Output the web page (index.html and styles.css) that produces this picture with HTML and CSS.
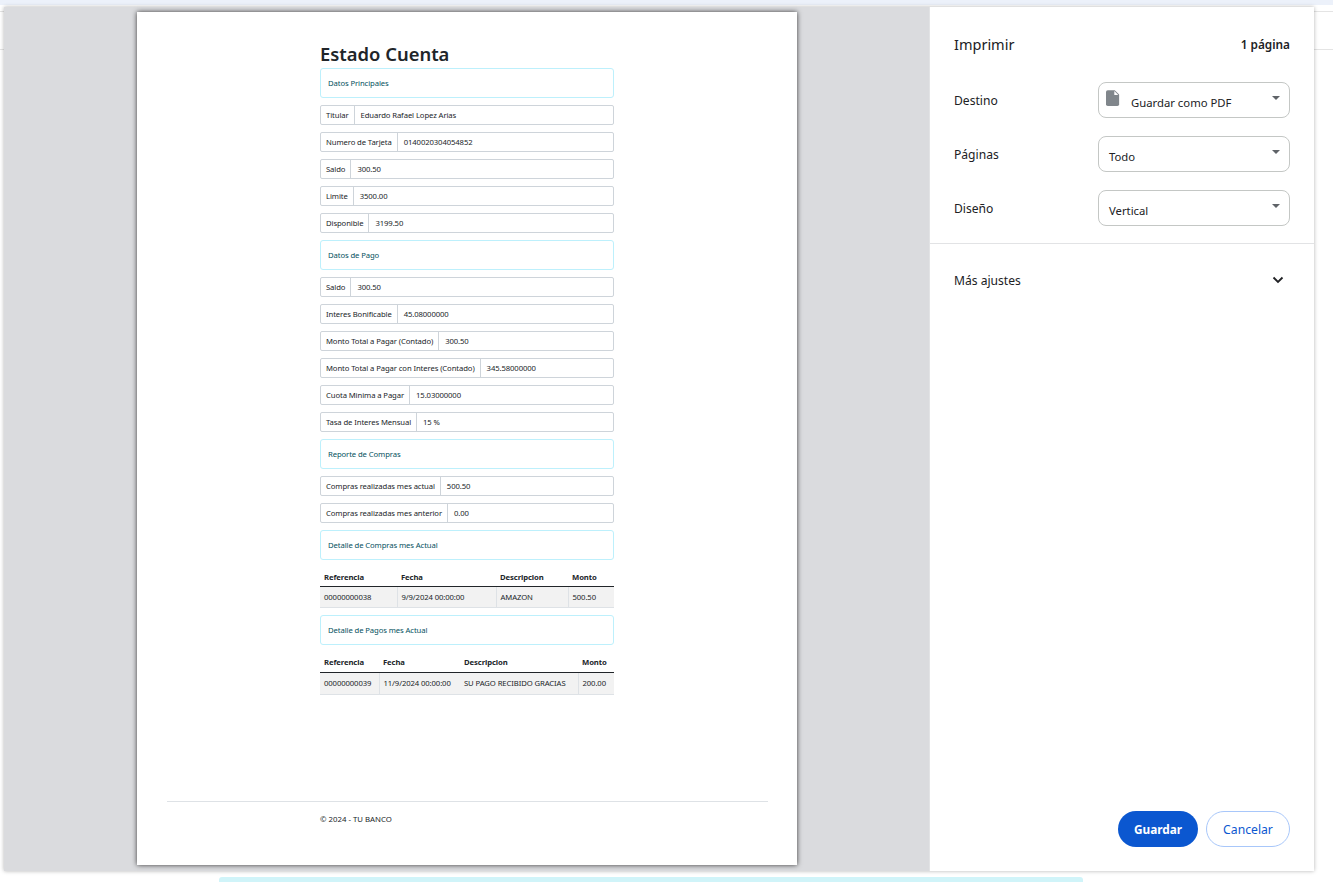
FILE: index.html
```html
<!DOCTYPE html>
<html lang="en">
<head>
    <meta charset="UTF-8">
    <meta name="viewport" content="width=device-width, initial-scale=1.0">
    <title>Imprimir - Estado Cuenta</title>
    <link rel="stylesheet" href="styles.css">
</head>

<body>

    <!-- page behind the print dialog -->
    <div class="top-strip"></div>
    <div class="back-line back-line-1"></div>
    <div class="back-line back-line-2"></div>

    <div class="dialog">

        <div class="preview">
            <div class="sheet">
                <div class="sheet-body">
                    <h2>Estado Cuenta</h2>

                    <div class="alert">Datos Principales</div>
                    <div class="group"><span class="group-label">Titular</span><span class="group-value">Eduardo Rafael Lopez Arias</span></div>
                    <div class="group"><span class="group-label">Numero de Tarjeta</span><span class="group-value">0140020304054852</span></div>
                    <div class="group"><span class="group-label">Saldo</span><span class="group-value">300.50</span></div>
                    <div class="group"><span class="group-label">Limite</span><span class="group-value">3500.00</span></div>
                    <div class="group"><span class="group-label">Disponible</span><span class="group-value">3199.50</span></div>

                    <div class="alert">Datos de Pago</div>
                    <div class="group"><span class="group-label">Saldo</span><span class="group-value">300.50</span></div>
                    <div class="group"><span class="group-label">Interes Bonificable</span><span class="group-value">45.08000000</span></div>
                    <div class="group"><span class="group-label">Monto Total a Pagar (Contado)</span><span class="group-value">300.50</span></div>
                    <div class="group"><span class="group-label">Monto Total a Pagar con Interes (Contado)</span><span class="group-value">345.58000000</span></div>
                    <div class="group"><span class="group-label">Cuota Minima a Pagar</span><span class="group-value">15.03000000</span></div>
                    <div class="group"><span class="group-label">Tasa de Interes Mensual</span><span class="group-value">15 %</span></div>

                    <div class="alert">Reporte de Compras</div>
                    <div class="group"><span class="group-label">Compras realizadas mes actual</span><span class="group-value">500.50</span></div>
                    <div class="group"><span class="group-label">Compras realizadas mes anterior</span><span class="group-value">0.00</span></div>

                    <div class="alert">Detalle de Compras mes Actual</div>
                    <table class="compras">
                        <colgroup><col class="c1"><col class="c2"><col class="c3"><col class="c4"></colgroup>
                        <thead>
                            <tr><th>Referencia</th><th>Fecha</th><th>Descripcion</th><th>Monto</th></tr>
                        </thead>
                        <tbody>
                            <tr><td>00000000038</td><td>9/9/2024 00:00:00</td><td>AMAZON</td><td>500.50</td></tr>
                        </tbody>
                    </table>

                    <div class="alert">Detalle de Pagos mes Actual</div>
                    <table class="pagos">
                        <colgroup><col class="c1"><col class="c2"><col class="c3"><col class="c4"></colgroup>
                        <thead>
                            <tr><th>Referencia</th><th>Fecha</th><th>Descripcion</th><th>Monto</th></tr>
                        </thead>
                        <tbody>
                            <tr><td>00000000039</td><td>11/9/2024 00:00:00</td><td>SU PAGO RECIBIDO GRACIAS</td><td>200.00</td></tr>
                        </tbody>
                    </table>
                </div>

                <div class="sheet-footer">
                    <p>&copy; 2024 - TU BANCO</p>
                </div>
            </div>
        </div>

        <div class="panel">
            <div class="panel-head">
                <span class="panel-title">Imprimir</span>
                <span class="panel-count">1 página</span>
            </div>

            <div class="setting">
                <span class="setting-label">Destino</span>
                <div class="select">
                    <svg class="file-icon" width="16" height="18" viewBox="0 0 16 18">
                        <path d="M2 0h8l5 5v11a2 2 0 0 1-2 2H2a2 2 0 0 1-2-2V2a2 2 0 0 1 2-2z" fill="#80868b"/>
                        <path d="M9.500 1v4.500H14z" fill="#fff"/>
                    </svg>
                    <span class="select-text">Guardar como PDF</span>
                    <span class="caret"></span>
                </div>
            </div>
            <div class="setting">
                <span class="setting-label">Páginas</span>
                <div class="select">
                    <span class="select-text">Todo</span>
                    <span class="caret"></span>
                </div>
            </div>
            <div class="setting">
                <span class="setting-label">Diseño</span>
                <div class="select">
                    <span class="select-text">Vertical</span>
                    <span class="caret"></span>
                </div>
            </div>

            <div class="more">
                <span class="setting-label">Más ajustes</span>
                <svg class="chevron" width="12" height="8" viewBox="0 0 12 8">
                    <path d="M1.500 1.500L6 6l4.500-4.500" fill="none" stroke="#202124" stroke-width="1.800"/>
                </svg>
            </div>

            <div class="actions">
                <button class="btn-save" type="button">Guardar</button>
                <button class="btn-cancel" type="button">Cancelar</button>
            </div>
        </div>

    </div>

    <div class="bottom-card"></div>

</body>
</html>
```

FILE: styles.css
```css
/* Page behind the dialog */
html, body {
    height: 100%;
}

body {
    margin: 0;
    background-color: white;
    font-family: "Noto Sans", "Open Sans", sans-serif;
    overflow: hidden;
}

.top-strip {
    height: 5px;
    background-color: #ecf1fa;
}

.back-line {
    position: absolute;
    left: 0;
    right: 0;
    height: 1px;
    background-color: #e4e4e4;
}

.back-line-1 {
    top: 11px;
}

.back-line-2 {
    top: 49px;
}

.bottom-card {
    width: 864px;
    height: 6px;
    margin: 6px 0 0 219px;
    background-color: #d0f4f9;
    border-radius: 3px 3px 0 0;
}

/* Print dialog */
.dialog {
    position: relative;
    display: flex;
    width: 1310px;
    height: 864px;
    margin: 2px 0 0 4px;
    background-color: white;
    box-shadow: 0 0 4px rgba(0, 0, 0, 0.3);
}

.preview {
    flex: 0 0 925px;
    padding: 5px 0 0 133px;
    box-sizing: border-box;
    background-color: #dadbde;
}

.sheet {
    display: flex;
    flex-direction: column;
    width: 660px;
    height: 853px;
    background-color: white;
    box-shadow: 0 0 5px rgba(0, 0, 0, 0.75);
    color: #212529;
}

.sheet-body {
    flex: 1;
    padding: 29px 183px 0;
}

h2 {
    margin: 0 0 2px;
    height: 25px;
    font-size: 18.400px;
    line-height: 25px;
    font-weight: 600;
}

.alert {
    height: 30px;
    margin-bottom: 7px;
    padding-left: 7px;
    box-sizing: border-box;
    border: 1px solid #bdf0fc;
    border-radius: 3px;
    color: #055160;
    font-size: 7.700px;
    letter-spacing: -0.1px;
    line-height: 28px;
}

.group {
    display: flex;
    height: 20px;
    margin-bottom: 7px;
    box-sizing: border-box;
    border: 1px solid #ced4da;
    border-radius: 2px;
    font-size: 7.700px;
    letter-spacing: -0.1px;
    line-height: 18px;
}

.group-label {
    padding: 0 5px 0 5px;
    border-right: 1px solid #ced4da;
}

.group-value {
    padding-left: 6px;
}

table {
    width: 294px;
    height: 41px;
    margin-bottom: 7px;
    table-layout: fixed;
    border-collapse: collapse;
    font-size: 7.700px;
    letter-spacing: -0.1px;
    white-space: nowrap;
}

th {
    height: 19px;
    padding: 0 3px 0 4px;
    text-align: left;
    font-weight: 700;
    border-bottom: 1px solid #212529;
}

td {
    height: 20px;
    padding: 0 3px 0 4px;
    background-color: #f2f2f2;
    border-bottom: 1px solid #dee2e6;
    border-right: 1px solid #dee2e6;
}

td:last-child {
    border-right: none;
}

.compras .c1 { width: 77px; }
.compras .c2 { width: 99px; }
.compras .c3 { width: 72px; }
.compras .c4 { width: 46px; }

.pagos {
    height: 42px;
}

.pagos th {
    height: 20px;
}

.pagos td {
    height: 19px;
    padding-bottom: 2px;
}

/* no rule between date and description in this table */
.pagos td:nth-child(2) {
    border-right: none;
}

.pagos .c1 { width: 59px; }
.pagos .c2 { width: 81px; }
.pagos .c3 { width: 118px; }
.pagos .c4 { width: 36px; }

.sheet-footer {
    margin: 0 29px 0 30px;
    height: 63px;
    padding-left: 153px;
    border-top: 1px solid #dee2e6;
    font-size: 7.800px;
}

.sheet-footer p {
    margin: 11px 0 0;
    line-height: 12px;
}

/* Settings panel */
.panel {
    flex: 1;
    display: flex;
    flex-direction: column;
    padding: 0 24px;
    border-left: 1px solid #e2e3e5;
    color: #202124;
    font-size: 13px;
}

.panel-head {
    display: flex;
    justify-content: space-between;
    align-items: center;
    height: 75px;
}

.panel-title {
    font-size: 14.500px;
    margin-top: -2px;
}

.panel-count {
    font-size: 11.800px;
    font-weight: 600;
    margin-top: -2px;
}

.setting {
    display: flex;
    justify-content: space-between;
    align-items: center;
    height: 36px;
    margin-bottom: 18px;
}

.setting-label {
    font-size: 12.100px;
}

.select {
    display: flex;
    align-items: center;
    width: 192px;
    height: 36px;
    padding: 0 10px;
    box-sizing: border-box;
    border: 1px solid #c4c7c5;
    border-radius: 8px;
}

.file-icon {
    width: 14px;
    height: 16px;
    margin: -4px 11px 0 -3px;
}

.select-text {
    flex: 1;
    margin-top: 4px;
    font-size: 11.300px;
}

.caret {
    width: 0;
    height: 0;
    margin: -4px -1px 0 0;
    border-left: 4px solid transparent;
    border-right: 4px solid transparent;
    border-top: 4px solid #5f6368;
}

.more {
    display: flex;
    justify-content: space-between;
    align-items: center;
    height: 72px;
    margin: -1px -24px 0;
    padding: 0 24px;
    border-top: 1px solid #e2e3e5;
}

.chevron {
    width: 12px;
    height: 8px;
    margin-right: 6px;
}

.actions {
    display: flex;
    justify-content: flex-end;
    gap: 8px;
    margin-top: auto;
    padding-bottom: 24px;
}

button {
    height: 36px;
    border-radius: 18px;
    font-family: "Noto Sans", "Open Sans", sans-serif;
    font-size: 12.200px;
}

.btn-save {
    width: 80px;
    border: none;
    background-color: #0b57d0;
    color: white;
    font-size: 11.800px;
    font-weight: 700;
}

.btn-cancel {
    width: 84px;
    border: 1px solid #a8c7fa;
    background-color: white;
    color: #0b57d0;
}
```
